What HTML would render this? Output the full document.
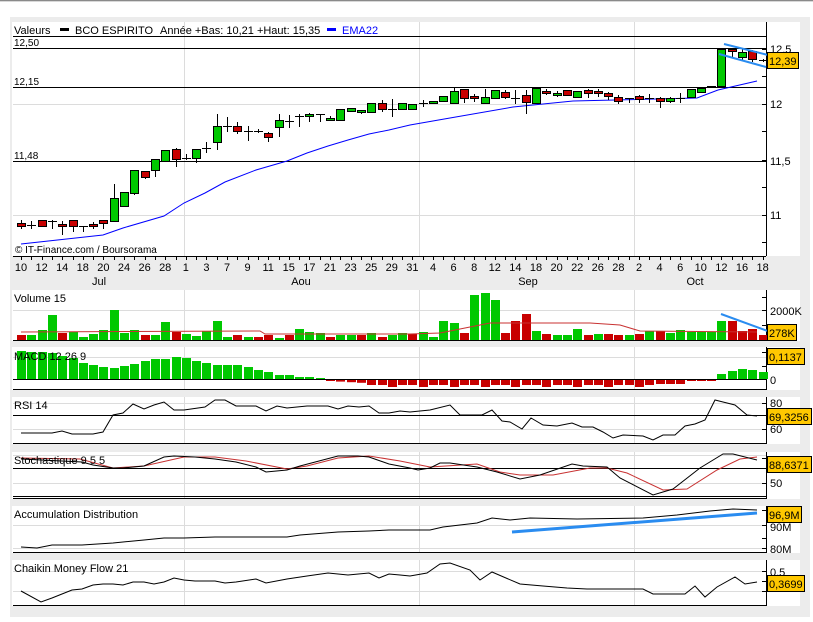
<!DOCTYPE html>
<html><head><meta charset="utf-8"><style>
html,body{margin:0;padding:0;background:#fff;width:813px;height:622px;overflow:hidden}
svg{display:block;font-family:"Liberation Sans",sans-serif;font-size:11px}
</style></head><body>
<svg id="s" width="813" height="622" xmlns="http://www.w3.org/2000/svg">
<rect x="0" y="0" width="813" height="622" fill="#fff"/>
<line x1="0" y1="0.5" x2="813" y2="0.5" stroke="#8a8a8a"/>
<line x1="0" y1="1.5" x2="813" y2="1.5" stroke="#d8d8d8"/>
<rect x="10" y="17" width="800" height="600" fill="#ececec"/>
<rect x="12" y="22" width="788" height="234" fill="#fff"/>
<rect x="12" y="290" width="788" height="51" fill="#fff"/>
<rect x="12" y="347" width="788" height="43" fill="#fff"/>
<rect x="12" y="397" width="788" height="47" fill="#fff"/>
<rect x="12" y="452" width="788" height="47" fill="#fff"/>
<rect x="12" y="506" width="788" height="47" fill="#fff"/>
<rect x="12" y="560" width="788" height="46" fill="#fff"/>
<g id="g"></g>
<g fill="#000">
<text x="14" y="34">Valeurs</text>
<rect x="60" y="28" width="9" height="3"/>
<text x="75" y="34">BCO ESPIRITO</text>
<text x="160" y="34">Année +Bas: 10,21 +Haut: 15,35</text>
<rect x="327" y="28" width="9" height="3" fill="#00f"/>
<text x="342" y="34" fill="#00f">EMA22</text>
<text x="14" y="46" font-size="10">12,50</text>
<text x="14" y="85" font-size="10">12,15</text>
<text x="14" y="159" font-size="10">11,48</text>
<text x="15" y="253" font-size="10">© IT-Finance.com / Boursorama</text>
<text x="770" y="53">12,5</text>
<text x="770" y="108">12</text>
<text x="770" y="165">11,5</text>
<text x="770" y="219">11</text>
<text x="99" y="285" text-anchor="middle">Jul</text>
<text x="301" y="285" text-anchor="middle">Aou</text>
<text x="528" y="285" text-anchor="middle">Sep</text>
<text x="695" y="285" text-anchor="middle">Oct</text>
<text x="14" y="302">Volume 15</text>
<text x="770" y="315">2000K</text>
<text x="14" y="360">MACD 12 26 9</text>
<text x="770" y="384">0</text>
<text x="14" y="409">RSI 14</text>
<text x="770" y="407">80</text>
<text x="770" y="433">60</text>
<text x="14" y="464">Stochastique 9 5 5</text>
<text x="770" y="487">50</text>
<text x="14" y="518">Accumulation Distribution</text>
<text x="770" y="531">90M</text>
<text x="770" y="553">80M</text>
<text x="14" y="572">Chaikin Money Flow 21</text>
<text x="770" y="576">0,5</text>
</g>
</svg>
<script>
var NS="http://www.w3.org/2000/svg",g=document.getElementById('g'),S=document.getElementById('s');
function el(t,a,p){var e=document.createElementNS(NS,t);for(var k in a)e.setAttribute(k,a[k]);(p||g).appendChild(e);return e;}
function X(i){return 21+i*10.3;}
function line(x1,y1,x2,y2,c,w){el('line',{x1:x1,y1:y1,x2:x2,y2:y2,stroke:c||'#000','stroke-width':w||1});}
function poly(pts,c,w){el('polyline',{points:pts.map(function(p){return p.join(',')}).join(' '),fill:'none',stroke:c,'stroke-width':w||1});}
var G='#dcdcdc';
[104.5,215.5].forEach(function(y){line(13,y,766,y,G);});
[184.5,419.5,634.5].forEach(function(x){line(x,22,x,256,G);line(x,290,x,341,G);line(x,347,x,390,G);line(x,397,x,444,G);line(x,452,x,499,G);line(x,506,x,553,G);line(x,560,x,606,G);});
[36.5,48.5,87.5,161.5].forEach(function(y){line(13,y,766,y,'#000');});
line(13,256.5,766,256.5,'#000');
line(766.5,22,766.5,256,'#000');
[49,76,104,131,160,187,215,242].forEach(function(y){line(762,y+.5,766,y+.5,'#000');});
for(var i=0;i<73;i++)line(Math.round(X(i))+.5,257,Math.round(X(i))+.5,260,'#000');
poly([[21,244],[103,235],[123,228],[164,216],[184,203],[205,193],[225,182],[256,170],[287,161],[307,153],[328,146],[348,140],[369,134],[389,130],[410,125],[450,118],[513,107],[573,101],[697,98],[718,90],[757,81]],'#00f',1);
var C=[[223,226,'r',220,229],[225,225,'x',221,229],[220,226,'r',220,226],[221,221,'x',220,229],[224,226,'r',221,235],[220,226,'r',220,232],[226,226,'x',226,232],[224,226,'r',222,229],[220,223,'r',220,229],[198,221,'g',184,221],[192,206,'g',192,206],[170,193,'g',170,195],[171,177,'r',171,179],[159,170,'g',159,177],[150,161,'g',150,161],[149,159,'r',148,167],[158,158,'x',154,160],[149,158,'g',149,163],[148,148,'x',142,153],[126,142,'g',114,150],[126,126,'x',117,132],[126,131,'r',122,134],[131,131,'x',126,141],[131,131,'x',129,133],[133,137,'r',132,142],[120,127,'g',114,137],[121,121,'x',115,128],[116,116,'x',114,127],[114,116,'g',113,122],[114,114,'x',114,122],[118,120,'g',116,121],[109,120,'g',109,120],[108,111,'g',108,111],[110,112,'g',110,114],[103,112,'g',103,112],[103,109,'r',100,112],[109,109,'x',99,117],[103,109,'g',103,109],[104,109,'g',104,109],[103,103,'x',100,107],[101,103,'g',101,103],[96,101,'g',96,101],[91,103,'g',88,103],[89,98,'r',89,103],[96,98,'r',94,102],[97,103,'g',89,103],[90,98,'g',90,98],[92,97,'r',90,99],[98,98,'x',90,104],[95,102,'r',90,114],[88,103,'g',88,103],[91,93,'r',89,95],[93,95,'g',91,97],[90,95,'r',90,95],[91,97,'g',91,97],[90,93,'r',89,98],[91,93,'r',89,97],[93,96,'r',92,100],[97,101,'r',95,104],[98,98,'x',98,103],[96,99,'r',95,103],[98,98,'x',94,103],[98,101,'r',97,108],[98,101,'g',97,103],[98,98,'x',93,103],[89,97,'g',89,97],[88,92,'g',88,92],[86,86,'x',86,86],[49,86,'g',49,86],[49,51,'r',49,58],[52,57,'g',49,61],[51,59,'r',50,62],[60,60,'x',59,62]];
C.forEach(function(c,i){var x=Math.round(X(i));line(x+.5,c[3],x+.5,c[4],'#000');
 if(c[2]=='x'){line(x-4,c[0]+.5,x+5,c[0]+.5,'#000');}
 else el('rect',{x:x-4+.5,y:c[0]+.5,width:8,height:Math.max(c[1]-c[0],2),fill:c[2]=='g'?'#00c800':'#c80000',stroke:'#000'});});
line(724,44,768,55,'#2a8cf0',2);line(719,54,766,67,'#2a8cf0',2);
var dl=['10','12','14','18','20','24','26','28','1','3','7','9','11','15','17','21','23','25','29','31','4','6','8','12','14','18','20','22','26','28','2','4','6','10','12','16','18'];
dl.forEach(function(t,k){var e=el('text',{x:X(k*2),y:271,'text-anchor':'middle',fill:'#000'});e.textContent=t;});
[[290,341],[347,390],[397,444],[452,499],[506,553],[560,606]].forEach(function(p){line(13,p[1]-.5,766,p[1]-.5,'#000');line(766.5,p[0],766.5,p[1],'#000');});
line(13,496.5,766,496.5,'#000');
line(13,310.5,766,310.5,G);
var V=[[335,'r'],[335,'g'],[330,'g'],[315,'g'],[333,'r'],[332,'g'],[337,'g'],[334,'g'],[330,'g'],[310,'g'],[333,'g'],[330,'g'],[335,'r'],[335,'g'],[322,'g'],[332,'r'],[334,'g'],[336,'g'],[331,'g'],[321,'g'],[337,'g'],[335,'r'],[337,'g'],[337,'r'],[335,'r'],[338,'g'],[335,'r'],[329,'g'],[332,'g'],[333,'g'],[337,'r'],[335,'g'],[335,'g'],[335,'r'],[333,'g'],[337,'r'],[335,'g'],[333,'g'],[334,'r'],[332,'g'],[337,'g'],[321,'g'],[323,'g'],[333,'r'],[295,'g'],[293,'g'],[300,'g'],[333,'r'],[321,'r'],[314,'r'],[331,'g'],[334,'r'],[335,'g'],[335,'g'],[329,'g'],[335,'r'],[334,'g'],[334,'r'],[335,'r'],[335,'g'],[334,'r'],[331,'g'],[331,'r'],[333,'g'],[330,'g'],[332,'g'],[332,'g'],[332,'g'],[321,'g'],[321,'r'],[331,'r'],[329,'r'],[335,'r']];
V.forEach(function(v,i){var x=Math.round(X(i));el('rect',{x:x-4,y:v[0],width:9,height:340-v[0],fill:v[1]=='g'?'#00c800':'#c80000'});});
poly([[21,332],[260,331],[265,334],[410,334],[440,333],[470,327],[490,323],[590,323],[620,325],[640,331],[757,332]],'#c83232',1);
line(721,314,776,334,'#2a8cf0',2);
line(13,379.5,766,379.5,'#000');line(13,357.5,766,357.5,G);
var M=[351,352,352,353,356,358,363,365,367,368,366,364,361,359,359,357,358,361,363,365,365,365,367,370,372,375,375,377,377,378];
for(var i=0;i<73;i++){var x=Math.round(X(i)),y;
 if(i<30){y=M[i];el('rect',{x:x-4,y:y,width:9,height:379-y,fill:'#00c800'});}
 else if(i<68){var b=i<34?381+(i-30)*0.6:(i<62?385+(i%3==0?2:0):(i<65?384:381));el('rect',{x:x-4,y:380,width:9,height:b-380,fill:'#c80000'});}
 else{y=[374,371,369,370,372][i-68];el('rect',{x:x-4,y:y,width:9,height:379-y,fill:'#00c800'});}}
line(13,403.5,766,403.5,G);line(13,429.5,766,429.5,G);line(13,415.5,766,415.5,'#000');
poly([[21,433],[52,433],[62,431],[72,434],[93,434],[103,432],[113,415],[123,413],[133,404],[144,409],[154,405],[164,402],[174,410],[184,410],[205,407],[215,400],[225,400],[236,406],[256,406],[266,411],[277,406],[287,408],[307,406],[328,406],[338,409],[348,406],[359,407],[369,406],[379,413],[389,413],[400,411],[410,412],[430,410],[450,405],[460,415],[482,415],[492,410],[502,421],[510,422],[522,429],[531,418],[543,425],[557,426],[572,423],[582,427],[593,427],[603,432],[613,438],[623,435],[643,436],[653,440],[663,435],[675,435],[685,426],[695,424],[705,420],[715,400],[723,402],[735,405],[747,415],[757,416]],'#000',1);
line(13,455.5,766,455.5,G);line(13,483.5,766,483.5,G);line(13,468.5,766,468.5,'#000');
poly([[21,458],[80,459],[113,468],[144,466],[184,457],[215,457],[246,461],[287,469],[307,466],[338,458],[369,456],[400,461],[410,463],[430,467],[477,464],[500,472],[520,475],[553,475],[590,468],[607,468],[627,473],[663,490],[687,489],[717,470],[740,459],[757,457]],'#c83232',1);
poly([[21,459],[82,462],[93,465],[113,468],[123,468],[144,466],[164,457],[174,456],[195,457],[215,459],[236,462],[256,467],[266,472],[287,470],[300,466],[338,456],[358,456],[369,457],[389,464],[410,468],[418,470],[430,468],[440,463],[450,463],[477,467],[497,472],[520,479],[540,475],[572,464],[583,466],[607,467],[620,478],[653,495],[673,489],[700,468],[723,454],[733,454],[757,460]],'#000',1);
line(13,525.5,766,525.5,G);line(13,548.5,766,548.5,G);
poly([[21,547],[37,548],[52,545],[82,545],[113,543],[144,540],[164,538],[184,538],[215,537],[287,537],[300,535],[338,532],[369,531],[389,530],[410,530],[430,530],[443,527],[477,523],[492,518],[510,520],[530,518],[577,519],[643,518],[677,515],[710,511],[733,509],[757,510]],'#000',1);
line(512,532,757,513,'#2a8cf0',3);
line(13,571.5,766,571.5,G);line(13,591.5,766,591.5,G);
poly([[21,591],[41,602],[52,598],[62,594],[72,590],[82,589],[93,585],[103,584],[113,584],[123,585],[133,582],[144,582],[154,584],[164,582],[174,578],[184,580],[195,581],[215,581],[225,583],[236,582],[256,579],[266,583],[287,579],[307,576],[328,573],[348,575],[369,573],[379,578],[389,574],[400,575],[410,576],[427,573],[440,564],[450,563],[470,570],[480,580],[492,572],[520,584],[543,586],[567,588],[587,589],[643,589],[653,594],[685,594],[695,586],[705,597],[717,587],[735,577],[745,584],[757,582]],'#000',1);
[297,310,325,352,366,379,403,415,429,458,468,483,510,525,538,548,571,581,591].forEach(function(y){line(762,y+.5,766,y+.5,'#000');});
function box(x,y,w,h,t){el('rect',{x:x+.5,y:y+.5,width:w,height:h,fill:'#ffc800',stroke:'#000'},S);var e=el('text',{x:x+2,y:y+h-3,fill:'#000','font-size':'11'},S);e.textContent=t;}
box(767,52,31,16,'12,39');box(767,324,29,16,'278K');box(767,348,37,16,'0,1137');box(767,408,44,16,'69,3256');box(767,456,44,16,'88,6371');box(767,506,34,16,'96,9M');box(767,575,37,16,'0,3699');
</script>
</body></html>
